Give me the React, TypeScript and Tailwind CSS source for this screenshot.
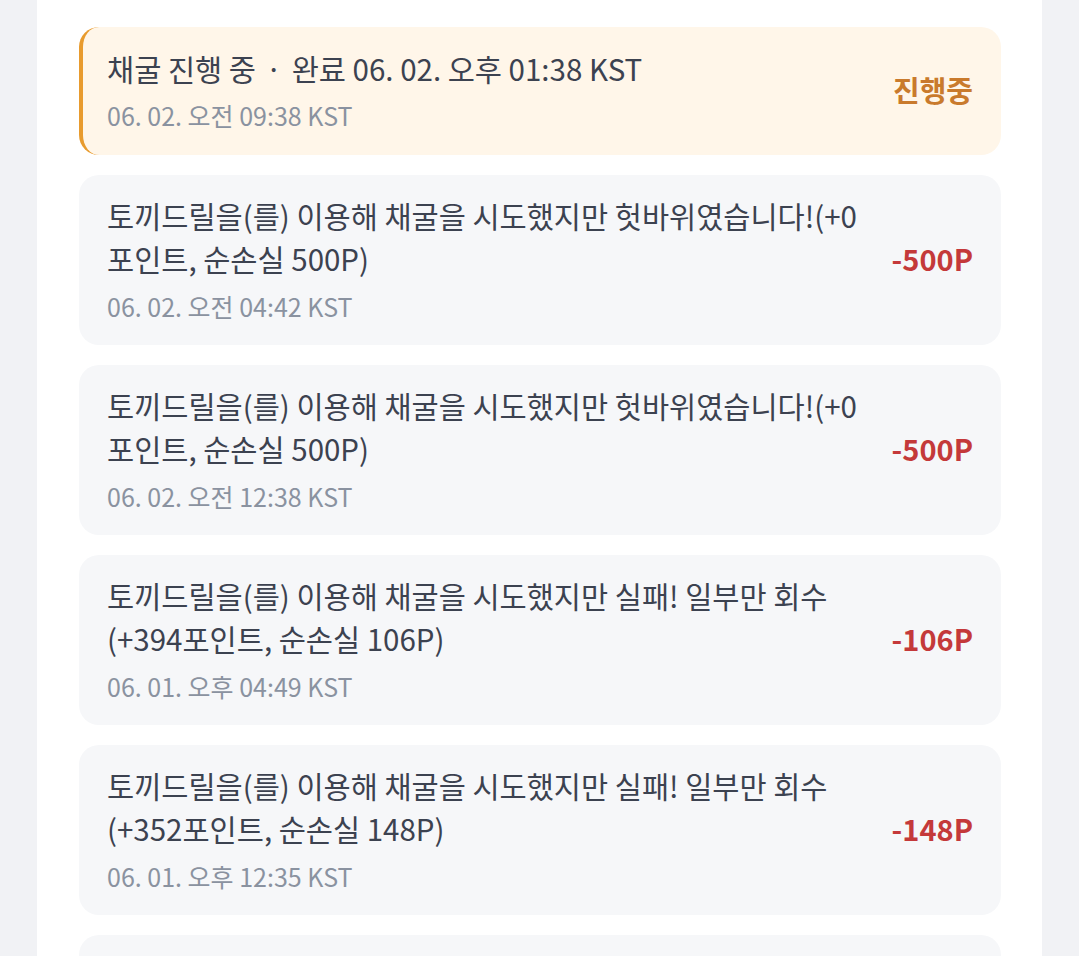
const items = [
  {
    title: '토끼드릴을(를) 이용해 채굴을 시도했지만 헛바위였습니다!(+0 포인트, 순손실 500P)',
    date: '06. 02. 오전 04:42 KST',
    amount: '-500P',
  },
  {
    title: '토끼드릴을(를) 이용해 채굴을 시도했지만 헛바위였습니다!(+0 포인트, 순손실 500P)',
    date: '06. 02. 오전 12:38 KST',
    amount: '-500P',
  },
  {
    title: '토끼드릴을(를) 이용해 채굴을 시도했지만 실패! 일부만 회수 (+394포인트, 순손실 106P)',
    date: '06. 01. 오후 04:49 KST',
    amount: '-106P',
  },
  {
    title: '토끼드릴을(를) 이용해 채굴을 시도했지만 실패! 일부만 회수 (+352포인트, 순손실 148P)',
    date: '06. 01. 오후 12:35 KST',
    amount: '-148P',
  },
  {
    title: '토끼드릴을(를) 이용해 채굴을 시도했지만 실패! 일부만 회수 (+410포인트, 순손실 90P)',
    date: '06. 01. 오전 08:21 KST',
    amount: '-90P',
  },
];

export default function App() {
  return (
    <div
      className="h-[956px] bg-[#f1f2f5] overflow-hidden"
      style={{ fontFamily: '"Noto Sans CJK KR", "Noto Sans", sans-serif' }}
    >
      <div className="ml-[37px] w-[1005px] h-full bg-white pl-[42px] pr-[41px] pt-[27px] overflow-hidden">
        <div className="flex flex-col gap-5">
          <div className="flex items-center justify-between rounded-[20px] border-l-4 border-[#e89b2e] bg-[#fff6e9] pl-6 pr-7 pt-[20px] pb-[22px]">
            <div>
              <p className="text-[29.5px] leading-[43.5px] text-[#3c4250]">
                채굴 진행 중 <span className="mx-[3px]">·</span> 완료 06. 02. 오후 01:38 KST
              </p>
              <p className="mt-[6px] text-[25px] leading-[36px] text-[#8a92a0]">06. 02. 오전 09:38 KST</p>
            </div>
            <span className="text-[29px] font-bold text-[#c97a2c]">진행중</span>
          </div>

          {items.map((item, i) => (
            <div key={i} className="flex items-center justify-between gap-6 rounded-[20px] bg-[#f6f7f9] px-7 pt-[19px] pb-[21px]">
              <div className="max-w-[780px]">
                <p className="break-keep text-[29.5px] leading-[43.5px] text-[#3c4250]">{item.title}</p>
                <p className="mt-[7px] text-[25px] leading-[36px] text-[#8a92a0]">{item.date}</p>
              </div>
              <span className="shrink-0 text-[29px] font-bold text-[#c4393a]">{item.amount}</span>
            </div>
          ))}
        </div>
      </div>
    </div>
  );
}
